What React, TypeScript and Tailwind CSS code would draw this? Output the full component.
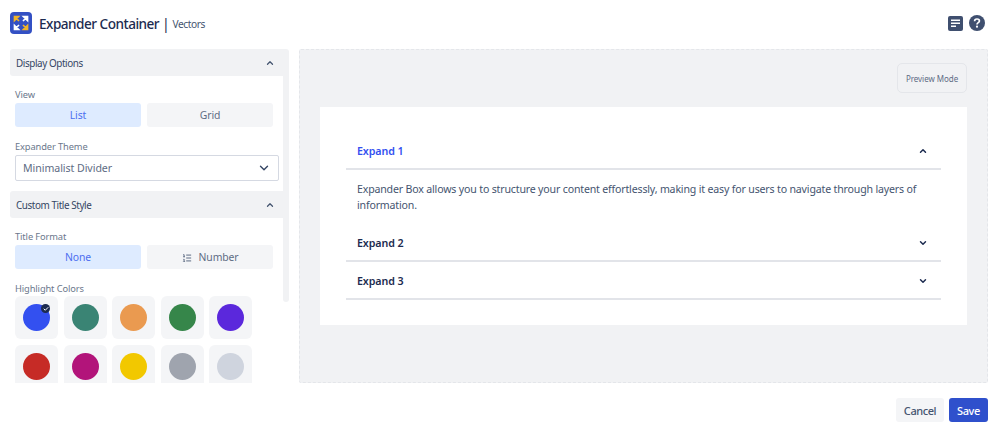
import { ChevronDown, ChevronUp, ListOrdered, Check } from "lucide-react";

const colors = [
    "bg-[#3350f0]", "bg-[#3a8474]", "bg-[#ea9a50]", "bg-[#36864a]", "bg-[#5b28dc]",
    "bg-[#c62b26]", "bg-[#b2147a]", "bg-[#f2c800]", "bg-[#9fa4ae]", "bg-[#cfd4de]",
];

const SectionHeader = ({ title }: { title: string }) => (
    <div className="flex h-[27px] shrink-0 items-center justify-between rounded-l-[3px] bg-[#f1f2f4] pl-[6px] pr-[8px] pt-[1px] text-[9.9px] text-[#344563]">
        <span>{title}</span>
        <ChevronUp size={10} strokeWidth={3} className="text-[#44546f]" />
    </div>
);

const Toggle = ({ active, children }: { active?: boolean; children: React.ReactNode }) => (
    <div className={`flex h-6 w-[126px] items-center justify-center gap-[7px] rounded-[3px] pt-[2px] text-[10.4px] tracking-[-0.01em] ${active ? "bg-[#deebff] text-[#4c6ef0]" : "bg-[#f4f5f7] text-[#5e6c84]"}`}>
        {children}
    </div>
);

const Label = ({ children }: { children: React.ReactNode }) => (
    <div className="h-[14px] text-[9.3px] leading-[16px] tracking-[-0.012em] text-[#6b778c]">{children}</div>
);

const AccordionRow = ({ title, open }: { title: string; open?: boolean }) => (
    <div className="flex h-[38px] items-center justify-between border-b-2 border-[#e2e4e9] pl-[11px] pr-[13px] pt-[2px]">
        <span className={`text-[10.7px] font-semibold tracking-[-0.01em] ${open ? "text-[#3350f0]" : "text-[#1c2b50]"}`}>{title}</span>
        {open
            ? <ChevronUp size={10} strokeWidth={3.5} className="text-[#1c2b50]" />
            : <ChevronDown size={10} strokeWidth={3.5} className="text-[#1c2b50]" />}
    </div>
);

const App = () => {
    return (
        <div className="flex h-[433px] w-[999px] flex-col overflow-hidden bg-white px-[10px] font-['Noto_Sans',sans-serif] tracking-[-0.026em]">
            <div className="flex h-[49px] shrink-0 items-center justify-between pb-[3px] pr-[4px]">
                <div className="flex items-center gap-[7px]">
                    <div className="flex h-[22px] w-[22px] items-center justify-center rounded-[4px] bg-[#3350c4]">
                        <svg width="16" height="16" viewBox="0 0 16 16" fill="none" strokeWidth="1.7">
                            <path d="M1.5 5.5V1.5H5.5L1.5 5.5Z M2 2L6 6" stroke="#f0b429" fill="#f0b429" />
                            <path d="M10.5 1.5H14.5V5.5L10.5 1.5Z M14 2L10 6" stroke="#ffffff" fill="#ffffff" />
                            <path d="M1.5 10.5V14.5H5.5L1.5 10.5Z M2 14L6 10" stroke="#ffffff" fill="#ffffff" />
                            <path d="M14.5 10.5V14.5H10.5L14.5 10.5Z M14 14L10 10" stroke="#f0b429" fill="#f0b429" />
                        </svg>
                    </div>
                    <div className="flex items-center gap-[3px] pt-[3px]">
                        <span className="text-[13.6px] font-medium tracking-[-0.038em] text-[#1c2b50]">Expander Container</span>
                        <span className="text-[14px] leading-none text-[#1c2b50]">|</span>
                        <span className="text-[10.2px] text-[#44546f]">Vectors</span>
                    </div>
                </div>
                <div className="flex items-center gap-[6px]">
                    <svg width="15" height="15" viewBox="0 0 15 15">
                        <rect width="15" height="15" rx="2" fill="#3f4f6f" />
                        <path d="M3 4.2H12M3 7.2H12M3 10.2H8" stroke="#ffffff" strokeWidth="1.6" />
                    </svg>
                    <svg width="16" height="16" viewBox="0 0 16 16">
                        <circle cx="8" cy="8" r="8" fill="#3f4f6f" />
                        <path d="M5.6 6.2C5.6 4.8 6.7 4 8 4C9.4 4 10.4 4.9 10.4 6C10.4 7.6 8 7.6 8 9.4" stroke="#ffffff" strokeWidth="1.7" fill="none" />
                        <circle cx="8" cy="11.7" r="1.1" fill="#ffffff" />
                    </svg>
                </div>
            </div>

            <div className="flex h-[334px] shrink-0 gap-[10px]">
                <div className="flex w-[279px] shrink-0">
                    <div className="flex h-full w-[273px] shrink-0 flex-col overflow-hidden">
                        <SectionHeader title="Display Options" />
                        <div className="px-[5px] pt-[11px]">
                            <Label>View</Label>
                            <div className="mt-[2px] flex gap-[6px]">
                                <Toggle active>List</Toggle>
                                <Toggle>Grid</Toggle>
                            </div>
                            <div className="mt-[12px]"><Label>Expander Theme</Label></div>
                            <div className="mt-[2px] flex h-[26px] w-[264px] items-center justify-between rounded-[2px] border border-[#d5d9e2] bg-white pl-[7px] pr-[7px] text-[10.6px] tracking-[-0.005em] text-[#5e6c84]">
                                <span className="pt-[2px]">Minimalist Divider</span>
                                <ChevronDown size={14} strokeWidth={2.4} className="text-[#344563]" />
                            </div>
                        </div>
                        <div className="mt-[10px]">
                            <SectionHeader title="Custom Title Style" />
                        </div>
                        <div className="px-[5px] pt-[11px]">
                            <Label>Title Format</Label>
                            <div className="mt-[2px] flex gap-[6px]">
                                <Toggle active>None</Toggle>
                                <Toggle><ListOrdered size={10} strokeWidth={2.4} />Number</Toggle>
                            </div>
                            <div className="mt-[12px]"><Label>Highlight Colors</Label></div>
                            <div className="mt-[1px] grid w-[237px] grid-cols-5 gap-x-[5.6px] gap-y-[6px]">
                                {colors.map((color, index) => (
                                    <div key={color} className="relative flex h-[43px] w-[43px] items-center justify-center rounded-[6px] bg-[#f4f5f7]">
                                        <div className={`h-[27px] w-[27px] rounded-full ${color}`}></div>
                                        {index == 0 && (
                                            <div className="absolute right-[8px] top-[8px] flex h-[9px] w-[9px] items-center justify-center rounded-full bg-[#1c2b50]">
                                                <Check size={6} strokeWidth={4} className="text-white" />
                                            </div>
                                        )}
                                    </div>
                                ))}
                            </div>
                        </div>
                    </div>
                    <div className="h-[253px] w-[6px] shrink-0 rounded-b-[3px] rounded-tr-[3px] bg-[#f1f2f4]"></div>
                </div>

                <div className="flex h-full w-[689px] shrink-0 flex-col rounded-[2px] border border-dashed border-[#e4e6ea] bg-[#f1f2f4] pl-[20px] pr-[20px] pt-[13px]">
                    <div className="flex justify-end">
                        <div className="flex h-[30px] w-[70px] items-center justify-center rounded-[5px] border border-[#e4e6ea] pt-[1px] text-[8px] tracking-[-0.005em] text-[#5e6c84]">
                            Preview Mode
                        </div>
                    </div>
                    <div className="mt-[14px] h-[218px] bg-white px-[26px] pt-[25px]">
                        <AccordionRow title="Expand 1" open />
                        <p className="h-[54px] pl-[11px] pr-[20px] pt-[11px] text-[10.6px] leading-[16px] tracking-[-0.0165em] text-[#44546f]">
                            Expander Box allows you to structure your content effortlessly, making it easy for users to navigate through layers of information.
                        </p>
                        <AccordionRow title="Expand 2" />
                        <AccordionRow title="Expand 3" />
                    </div>
                </div>
            </div>

            <div className="flex justify-end gap-[5px] pr-[1px] pt-[15px]">
                <div className="flex h-6 w-[48px] items-center justify-center rounded-[3px] bg-[#f4f5f7] pt-[2px] text-[11px] font-medium text-[#44546f]">Cancel</div>
                <div className="flex h-6 w-[39px] items-center justify-center rounded-[3px] bg-[#2f50cc] pt-[2px] text-[11px] font-medium text-white">Save</div>
            </div>
        </div>
    );
};

export default App;
